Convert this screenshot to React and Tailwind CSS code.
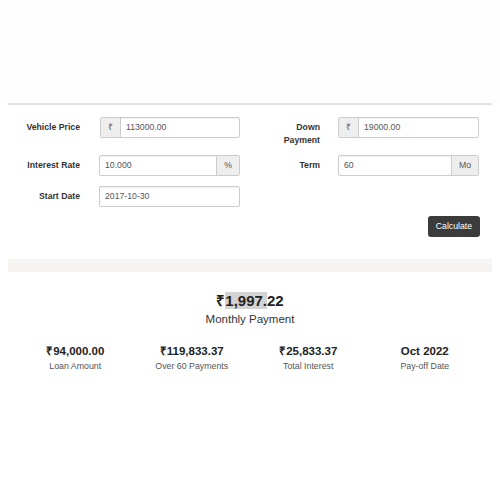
import React from 'react'

function Addon({children, side}){
  return (
    <span className={`flex items-center justify-center bg-[#eeeeee] border-[#cccccc] text-[#555555] ${side==='left' ? 'border-r' : 'border-l'} px-[7px]`}>
      {children}
    </span>
  )
}

function Field({pre, post, value, width='w-[140px]'}){
  return (
    <div className={`flex h-[21px] ${width} border border-[#cccccc] rounded-[2px] bg-white overflow-hidden shadow-[inset_0_1px_1px_rgba(0,0,0,0.06)]`}>
      {pre && <Addon side="left">{pre}</Addon>}
      <input readOnly value={value} className="flex-1 min-w-0 px-[5px] text-[#555555] outline-none bg-transparent" />
      {post && <Addon side="right">{post}</Addon>}
    </div>
  )
}

function Label({children, width}){
  return <div className={`${width} text-right font-bold text-[#333333] leading-[13px] pt-[4px]`}>{children}</div>
}

const stats = [
  ['₹94,000.00', 'Loan Amount'],
  ['₹119,833.37', 'Over 60 Payments'],
  ['₹25,833.37', 'Total Interest'],
  ['Oct 2022', 'Pay-off Date'],
]

export default function App(){
  return (
    <div className="w-[500px] h-[500px] bg-white text-[8.7px] font-['Liberation_Sans',Arial,sans-serif]">
      <div className="h-[103px] bg-[#fdfdfd]"></div>
      <div className="mx-[8px] h-[2px] bg-[#e2e2e2]"></div>

      {/* form */}
      <div className="mx-[8px] pt-[12px]">
        <div className="flex items-start">
          <Label width="w-[72px]">Vehicle Price</Label>
          <div className="ml-[20px]"><Field pre="₹" value="113000.00" /></div>
          <Label width="w-[80px]">Down<br />Payment</Label>
          <div className="ml-[18px]"><Field pre="₹" value="19000.00" width="w-[141px]" /></div>
        </div>
        <div className="flex items-start mt-[8px]">
          <Label width="w-[72px]">Interest Rate</Label>
          <div className="ml-[19px]"><Field post="%" value="10.000" width="w-[141px]" /></div>
          <Label width="w-[80px]">Term</Label>
          <div className="ml-[18px]"><Field post="Mo" value="60" width="w-[141px]" /></div>
        </div>
        <div className="flex items-start mt-[10px]">
          <Label width="w-[72px]">Start Date</Label>
          <div className="ml-[19px]"><Field value="2017-10-30" width="w-[141px]" /></div>
        </div>
        <div className="flex justify-end pr-[12px] mt-[9px]">
          <button className="h-[21px] px-[8px] bg-[#3b3b3b] text-white rounded-[3px] text-[8.7px]">Calculate</button>
        </div>
      </div>

      <div className="mx-[8px] mt-[22px] h-[13px] bg-[#f6f3f3]"></div>

      {/* results */}
      <div className="mt-[20px] text-center">
        <div className="text-[15px] font-bold text-[#222222] leading-[18px]">
          ₹<span className="bg-[#d3d3d3]">1,997.</span>22
        </div>
        <div className="text-[11.5px] text-[#333333] leading-[14px] mt-[2px]">Monthly Payment</div>
      </div>

      <div className="mx-[17px] mt-[18px] grid grid-cols-4 text-center">
        {stats.map(([v, l]) => (
          <div key={l}>
            <div className="text-[11.5px] font-bold text-[#222222] leading-[14px]">{v}</div>
            <div className="text-[8.8px] text-[#555555] leading-[12px] mt-[2px]">{l}</div>
          </div>
        ))}
      </div>
    </div>
  )
}
